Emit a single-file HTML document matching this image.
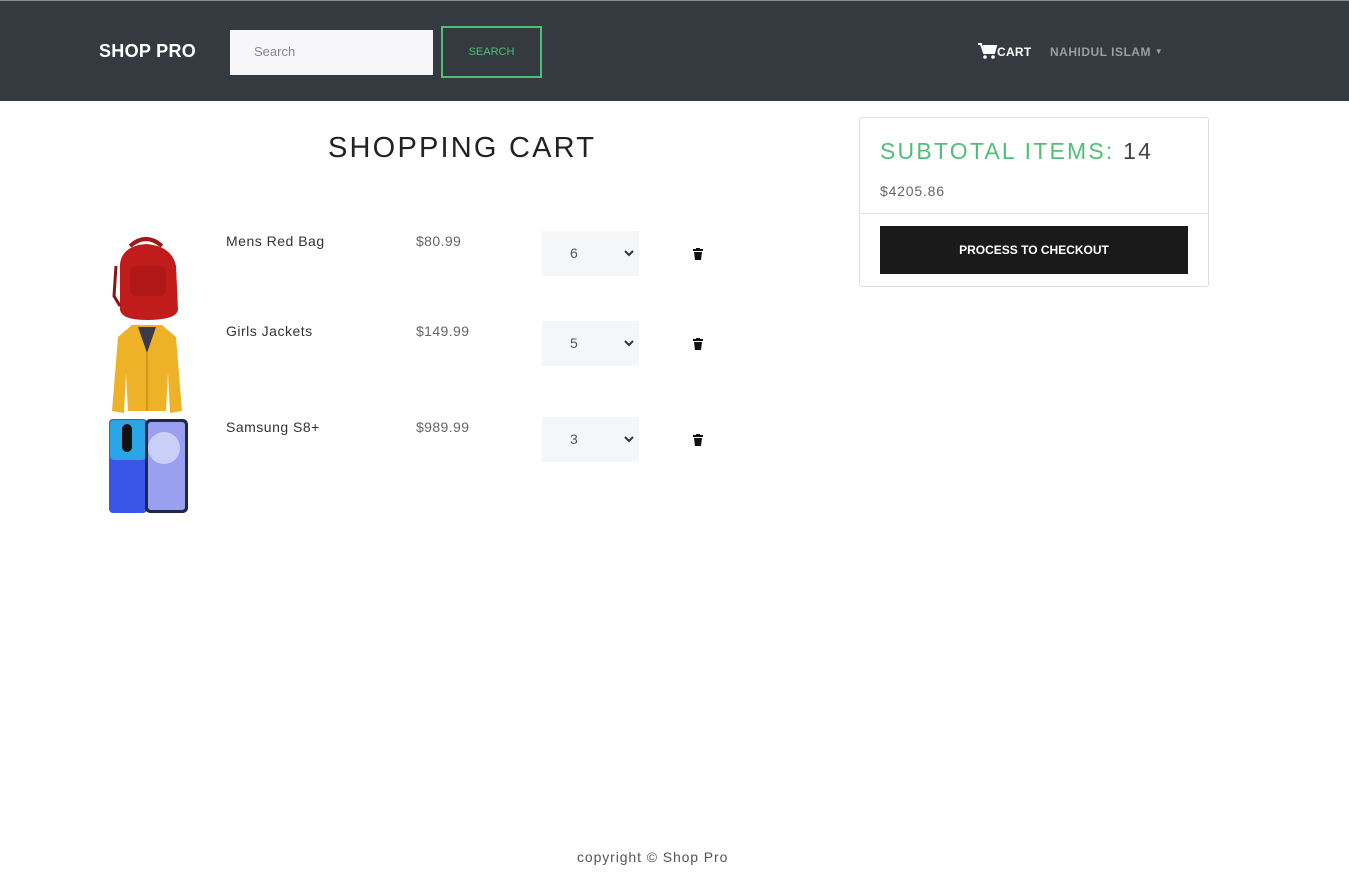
<!DOCTYPE html>
<html><head><meta charset="utf-8"><style>
*{box-sizing:border-box;margin:0;padding:0}
body{width:1349px;height:878px;background:#fff;font-family:"Liberation Sans",sans-serif;position:relative;overflow:hidden;color:#333}
.nav{position:absolute;left:0;top:0;width:1349px;height:101px;background:#343a40;border-top:1px solid #8a8e92}
.abs{position:absolute}
.brand{left:99px;top:40px;color:#fff;font-size:18px;font-weight:bold;letter-spacing:.3px}
.search{left:230px;top:29px;width:203px;height:45px;background:#f7f7f9;color:#888;font-size:13px;padding:14px 24px}
.sbtn{left:441px;top:25px;width:101px;height:52px;border:2px solid #4fbf75;color:#4fbf75;font-size:11px;text-align:center;line-height:48px}
.cart{left:978px;top:42px;color:#fff;font-size:12px;font-weight:bold;letter-spacing:.3px}
.user{left:1050px;top:44px;color:#9a9da1;font-size:12px;font-weight:bold;letter-spacing:.5px}
h1{position:absolute;left:328px;top:132px;font-size:29px;font-weight:normal;letter-spacing:2.2px;color:#222}
.name{font-size:14px;color:#333;letter-spacing:.5px;left:226px}
.price{font-size:14px;color:#666;letter-spacing:.4px;left:416px}
.sel{left:542px;width:97px;height:45px;background:#f5f6f8;font-size:14px;color:#555}
.sel span{position:absolute;left:28px;top:14px}
.sel svg{position:absolute;right:4px;top:18px}
.trash{left:693px}
.card{left:859px;top:117px;width:350px;height:170px;border:1px solid #ddd;border-radius:3px}
.card h2{position:absolute;left:20px;top:20px;font-size:23px;font-weight:normal;letter-spacing:2.2px;color:#4fbf75}
.card h2 b{font-weight:normal;color:#444}
.card .tot{position:absolute;left:20px;top:65px;font-size:14px;color:#666;letter-spacing:.8px}
.card hr{position:absolute;left:0;top:95px;width:348px;border:0;border-top:1px solid #ddd}
.co{position:absolute;left:20px;top:108px;width:308px;height:48px;background:#1a1a1a;color:#fff;font-size:12px;font-weight:bold;text-align:center;line-height:48px}
.foot{left:577px;top:849px;font-size:14px;color:#555;letter-spacing:.9px}
</style></head><body>
<div class="nav">
<div class="abs brand">SHOP PRO</div>
<div class="abs search">Search</div>
<div class="abs sbtn">SEARCH</div>
<div class="abs cart"><svg width="19" height="16" viewBox="0 0 19 16" style="vertical-align:-3px"><path d="M0 1h3l3 9h10l2-7H5" fill="none" stroke="#fff" stroke-width="2"/><path d="M5 3h13l-2 7H6z" fill="#fff"/><circle cx="7" cy="14" r="1.8" fill="#fff"/><circle cx="15" cy="14" r="1.8" fill="#fff"/></svg>CART</div>
<div class="abs user">NAHIDUL ISLAM <span style="font-size:8px;vertical-align:2px">▼</span></div>
</div>
<h1>SHOPPING CART</h1>

<svg class="abs" style="left:110px;top:236px" width="72" height="86" viewBox="0 0 72 86"><path d="M20 10 Q36 -4 52 10" stroke="#a01818" stroke-width="4" fill="none"/><path d="M10 28 Q12 10 36 8 Q62 10 66 30 L68 74 Q66 84 36 84 Q12 84 10 74Z" fill="#c01c1c"/><path d="M6 30 L4 60 L10 70" stroke="#8a1414" stroke-width="3" fill="none"/><rect x="20" y="30" width="36" height="30" rx="6" fill="#b01818"/></svg>
<svg class="abs" style="left:110px;top:323px" width="74" height="92" viewBox="0 0 74 92"><path d="M22 2 L52 2 L66 14 L72 88 L60 90 L58 50 L56 88 L18 88 L16 50 L14 90 L2 88 L8 14Z" fill="#eeb228"/><path d="M28 4 L37 30 L46 4Z" fill="#3a3a4a"/><path d="M37 30 L37 88" stroke="#c99016" stroke-width="1.5"/></svg>
<svg class="abs" style="left:108px;top:418px" width="81" height="96" viewBox="0 0 81 96"><rect x="1" y="1" width="38" height="94" rx="4" fill="#3a56e8"/><rect x="2" y="2" width="36" height="40" rx="4" fill="#2aa6e8"/><rect x="37" y="1" width="43" height="94" rx="5" fill="#1e2a44"/><rect x="40" y="4" width="37" height="88" rx="3" fill="#9a9ff0"/><circle cx="56" cy="30" r="16" fill="#c8d0fa"/><rect x="14" y="6" width="10" height="28" rx="5" fill="#111"/></svg>

<div class="abs name" style="top:233px">Mens Red Bag</div>
<div class="abs price" style="top:233px">$80.99</div>
<div class="abs sel" style="top:231px"><span>6</span><svg width="12" height="8" viewBox="0 0 12 8"><path d="M2 2l4 4 4-4" stroke="#333" stroke-width="2" fill="none"/></svg></div>
<div class="abs name" style="top:323px">Girls Jackets</div>
<div class="abs price" style="top:323px">$149.99</div>
<div class="abs sel" style="top:321px"><span>5</span><svg width="12" height="8" viewBox="0 0 12 8"><path d="M2 2l4 4 4-4" stroke="#333" stroke-width="2" fill="none"/></svg></div>
<div class="abs name" style="top:419px">Samsung S8+</div>
<div class="abs price" style="top:419px">$989.99</div>
<div class="abs sel" style="top:417px"><span>3</span><svg width="12" height="8" viewBox="0 0 12 8"><path d="M2 2l4 4 4-4" stroke="#333" stroke-width="2" fill="none"/></svg></div>

<svg class="abs trash" style="top:248px" width="10" height="12" viewBox="0 0 10 12"><rect x="0" y="1" width="10" height="2" fill="#111"/><rect x="3" y="0" width="4" height="2" fill="#111"/><path d="M1 4h8l-1 8H2z" fill="#111"/></svg>
<svg class="abs trash" style="top:338px" width="10" height="12" viewBox="0 0 10 12"><rect x="0" y="1" width="10" height="2" fill="#111"/><rect x="3" y="0" width="4" height="2" fill="#111"/><path d="M1 4h8l-1 8H2z" fill="#111"/></svg>
<svg class="abs trash" style="top:434px" width="10" height="12" viewBox="0 0 10 12"><rect x="0" y="1" width="10" height="2" fill="#111"/><rect x="3" y="0" width="4" height="2" fill="#111"/><path d="M1 4h8l-1 8H2z" fill="#111"/></svg>

<div class="abs card">
<h2>SUBTOTAL ITEMS: <b>14</b></h2>
<div class="tot">$4205.86</div>
<hr>
<div class="co">PROCESS TO CHECKOUT</div>
</div>
<div class="abs foot">copyright © Shop Pro</div>
</body></html>
